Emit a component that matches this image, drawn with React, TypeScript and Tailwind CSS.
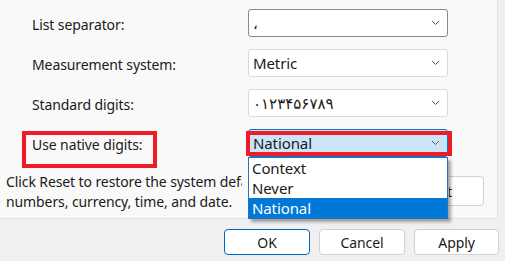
import React from "react";

const font = { fontFamily: '"Noto Sans", "DejaVu Sans", sans-serif' };

function Chevron() {
  return (
    <svg width="9" height="6" viewBox="0 0 9 6" className="shrink-0">
      <polyline points="1,1 4.5,4.5 8,1" fill="none" stroke="#5a5a5a" strokeWidth="1" />
    </svg>
  );
}

function Select({ value, dark, active }: { value: string; dark?: boolean; active?: boolean }) {
  const border = active ? "border-[#0078d4] bg-[#cce4f7]" : dark ? "border-[#8a8a8a] bg-white" : "border-[#dadada] bg-white";
  return (
    <div className={`flex h-[28px] w-[200px] items-center justify-between rounded-[3px] border pl-[4px] pr-[7px] ${border}`}>
      <span className="text-[15px] leading-none">{value}</span>
      <Chevron />
    </div>
  );
}

const rows = [
  { label: "List separator:", value: "،", dark: true },
  { label: "Measurement system:", value: "Metric" },
  { label: "Standard digits:", value: "۰۱۲۳۴۵۶۷۸۹" },
];

export default function App() {
  return (
    <div className="flex h-[261px] w-[505px] flex-col bg-[#f0f0f0] text-[14px] tracking-[-0.1px] text-[#1a1a1a]" style={font}>
      <div className="relative h-[219px] w-[498px] border-b border-r border-[#e3e3e3] bg-[#f9f9f9]">
        <div className="flex flex-col gap-[12px] pt-[9px]">
          {rows.map((r) => (
            <div key={r.label} className="flex items-center">
              <span className="w-[248px] pl-[32px] pt-[2px]">{r.label}</span>
              <Select value={r.value} dark={r.dark} />
            </div>
          ))}
          <div className="flex items-center">
            <span className="w-[248px] pl-[32px] pt-[2px]">Use native digits:</span>
            <Select value="National" active />
          </div>
        </div>

        <p className="mt-[15px] w-[242px] overflow-hidden whitespace-nowrap pl-[6px] leading-[20px]">
          Click Reset to restore the system default settings for
          <br />
          numbers, currency, time, and date.
        </p>

        {/* Reset button, mostly hidden behind the open list */}
        <div className="absolute left-[449px] top-[176px] h-[30px] w-[35px] overflow-hidden">
          <div className="ml-[-65px] flex h-[30px] w-[100px] items-center justify-center rounded-[4px] border border-[#d0d0d0] bg-white">
            Reset
          </div>
        </div>

        {/* annotation boxes */}
        <div className="absolute left-[22px] top-[131px] h-[37px] w-[135px] border-[4px] border-[#ee1c25]" />
        <div className="absolute left-[246px] top-[131px] h-[25px] w-[206px] border-[4px] border-[#ee1c25]" />

        {/* open dropdown list */}
        <div className="absolute left-[248px] top-[157px] w-[200px] border border-[#2a6fb8] bg-white text-[15px] shadow-[3px_3px_3px_rgba(0,0,0,0.35)]">
          <div className="h-[20px] pl-[3px] leading-[20px]">Context</div>
          <div className="h-[20px] pl-[3px] leading-[20px]">Never</div>
          <div className="h-[20px] bg-[#0078d7] pl-[3px] leading-[20px] text-white">National</div>
        </div>
      </div>

      <div className="flex justify-end gap-[9px] pr-[6px] pt-[10px]">
        <button className="h-[26px] w-[86px] rounded-[4px] border border-[#0067c0] bg-white">OK</button>
        <button className="h-[26px] w-[86px] rounded-[4px] border border-[#d0d0d0] bg-white">Cancel</button>
        <button className="h-[26px] w-[85px] rounded-[4px] border border-[#d0d0d0] bg-white">Apply</button>
      </div>
    </div>
  );
}
